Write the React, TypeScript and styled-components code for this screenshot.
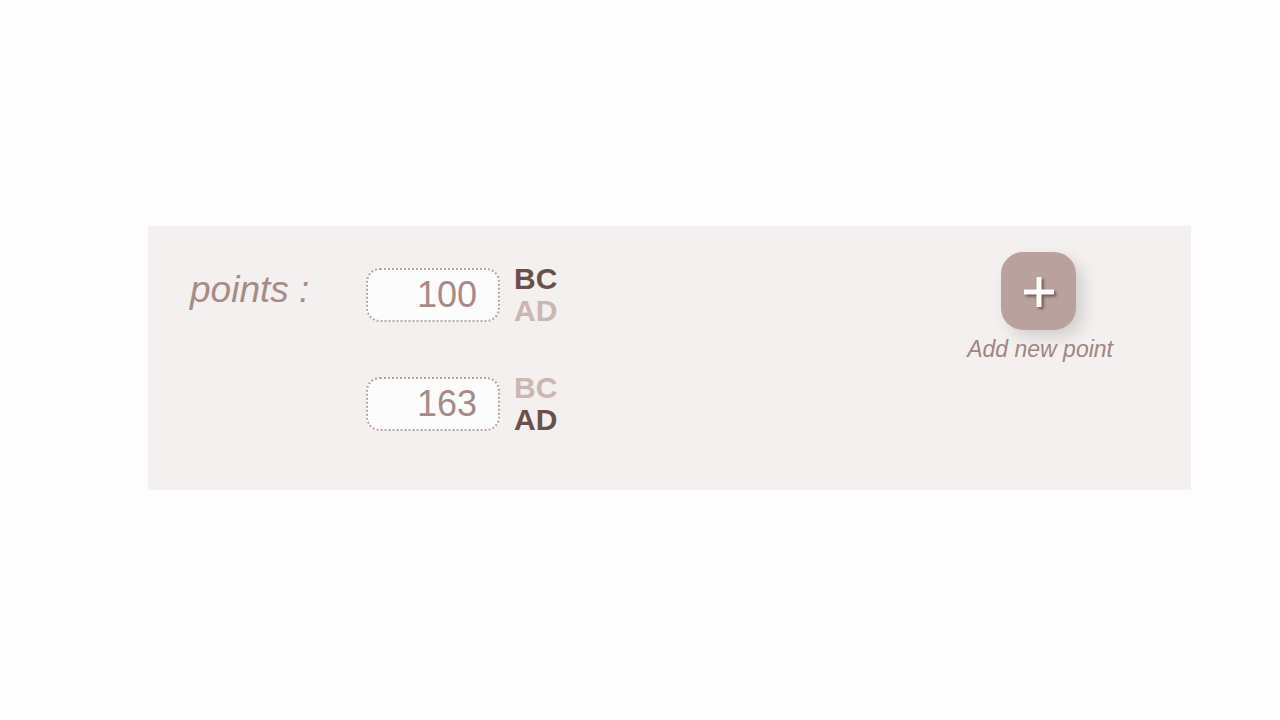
import { createGlobalStyle } from "styled-components";
import styled from "styled-components";
import { useState } from "react";

type Era = "BC" | "AD";

interface Point {
  value: string;
  era: Era;
}

export default function App() {
  // Points shown in the editor
  const [points, setPoints] = useState<Point[]>([
    { value: "100", era: "BC" },
    { value: "163", era: "AD" },
  ]);

  const update = (index: number, patch: Partial<Point>) =>
    setPoints((list) => list.map((p, i) => (i === index ? { ...p, ...patch } : p)));

  return (
    <>
      <GlobalStyle />
      <Page>
        <Panel>
          <PointsGrid>
            <Label>points :</Label>
            <Rows>
              {points.map((point, index) => (
                <PointRow key={index}>
                  <YearInput
                    value={point.value}
                    onChange={(e) => update(index, { value: e.target.value })}
                  />
                  <EraToggle>
                    <EraOption
                      $active={point.era === "BC"}
                      onClick={() => update(index, { era: "BC" })}
                    >
                      BC
                    </EraOption>
                    <EraOption
                      $active={point.era === "AD"}
                      onClick={() => update(index, { era: "AD" })}
                    >
                      AD
                    </EraOption>
                  </EraToggle>
                </PointRow>
              ))}
            </Rows>
          </PointsGrid>
          <AddColumn>
            <AddButton
              aria-label="Add new point"
              onClick={() => setPoints((list) => [...list, { value: "", era: "AD" }])}
            >
              <PlusIcon viewBox="0 0 30 30">
                <path d="M0 15H30M15 0V30" stroke="#fff" strokeWidth="5" />
              </PlusIcon>
            </AddButton>
            <AddCaption>Add new point</AddCaption>
          </AddColumn>
        </Panel>
      </Page>
    </>
  );
}

const GlobalStyle = createGlobalStyle`
  body {
    margin: 0;
    background: #fefdfd;
    font-family: "Liberation Sans", Arial, sans-serif;
  }
`;

const Page = styled.div`
  padding: 226px 89px 0 148px;
`;

const Panel = styled.div`
  display: flex;
  justify-content: space-between;
  align-items: flex-start;
  background: #f4f0ef;
  padding: 26px 78px 54px 42px;
`;

const PointsGrid = styled.div`
  display: grid;
  grid-template-columns: 176px auto;
  margin-top: 11px;
`;

const Label = styled.div`
  font-size: 37px;
  line-height: 37px;
  font-style: italic;
  color: #a68b86;
  margin-top: 8px;
`;

const Rows = styled.div`
  display: flex;
  flex-direction: column;
  gap: 45px;
`;

const PointRow = styled.div`
  display: flex;
  align-items: center;
`;

const YearInput = styled.input`
  box-sizing: border-box;
  width: 134px;
  height: 54px;
  border: 2px dotted #bba5a0;
  border-radius: 14px;
  background: #fdfcfc;
  padding: 0 21px 0 10px;
  text-align: right;
  font-family: "Liberation Sans", Arial, sans-serif;
  font-size: 36px;
  color: #a68b86;
  outline: none;
`;

const EraToggle = styled.div`
  display: flex;
  flex-direction: column;
  margin-left: 14px;
`;

const EraOption = styled.span<{ $active: boolean }>`
  font-size: 30px;
  line-height: 32px;
  font-weight: bold;
  color: ${(p) => (p.$active ? "#6b5049" : "#cab7b2")};
  cursor: pointer;
`;

const AddColumn = styled.div`
  display: flex;
  flex-direction: column;
  align-items: center;
`;

const AddButton = styled.button`
  display: flex;
  align-items: center;
  justify-content: center;
  width: 75px;
  height: 78px;
  border: none;
  border-radius: 22px;
  background: #b9a29e;
  box-shadow: 7px 7px 16px rgba(0, 0, 0, 0.14);
  padding: 0;
  cursor: pointer;
  margin-right: 3px;
`;

const PlusIcon = styled.svg`
  width: 30px;
  height: 30px;
  margin-top: 2px;
  overflow: visible;
  filter: drop-shadow(2px 2px 1.5px rgba(60, 30, 25, 0.6));
`;

const AddCaption = styled.div`
  margin-top: 6px;
  font-size: 23px;
  font-style: italic;
  color: #a08681;
`;
